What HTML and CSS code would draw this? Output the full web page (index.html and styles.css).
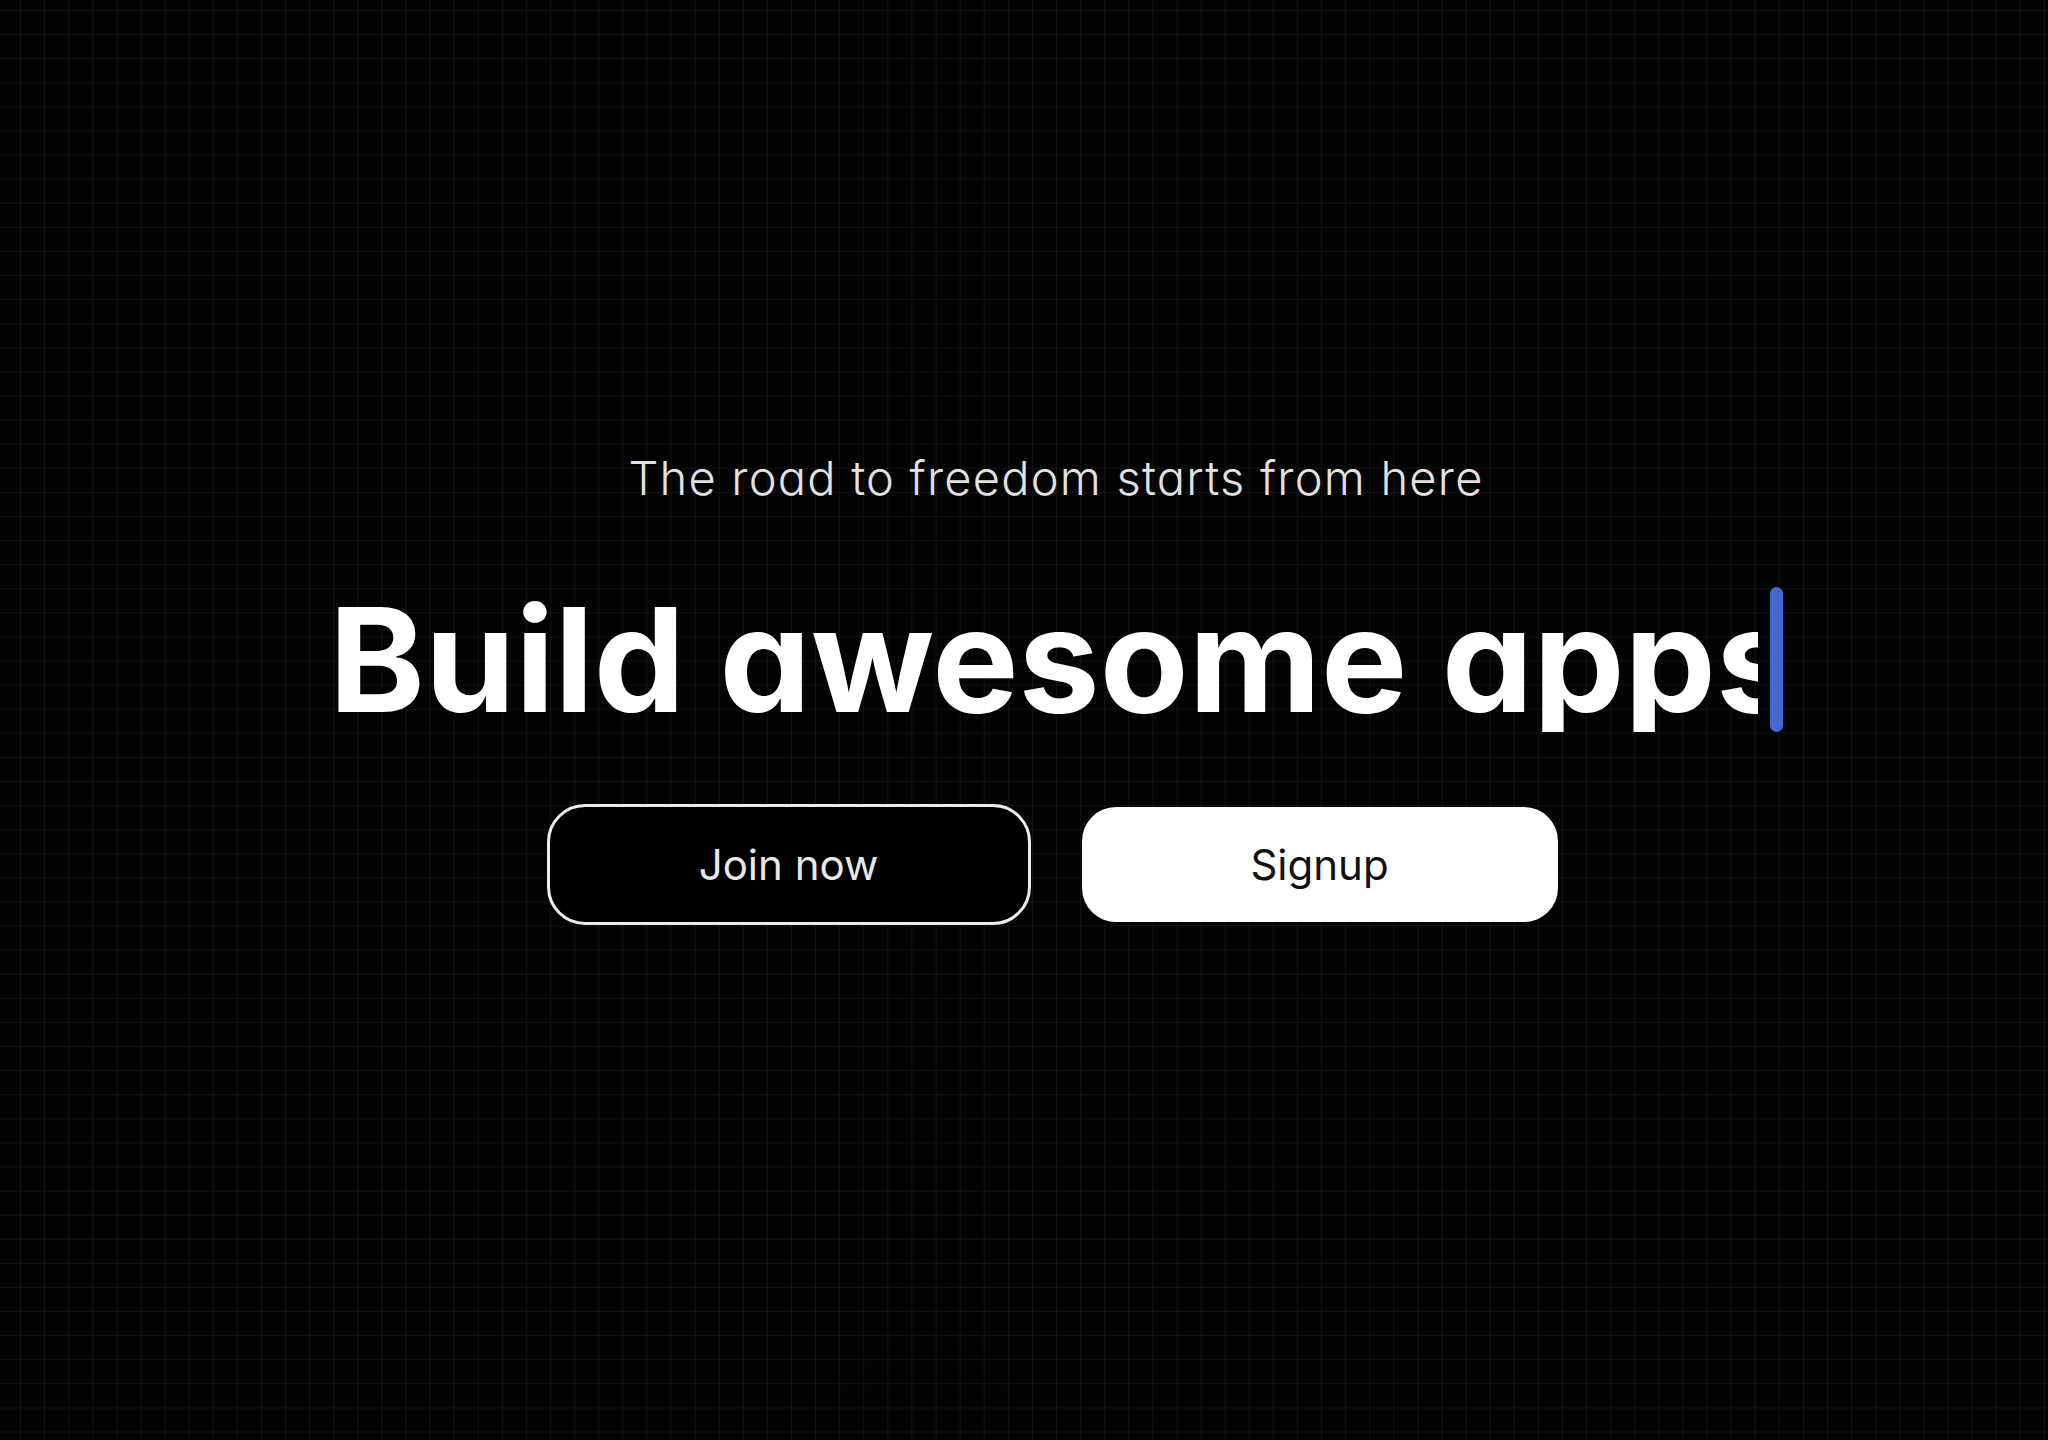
FILE: index.html
```html
<!DOCTYPE html>
<html lang="en">
<head>
<meta charset="utf-8">
<title>Build awesome apps</title>
<link rel="stylesheet" href="styles.css">
</head>
<body>
<main class="hero">
  <p class="tagline">The road to freedom starts from here</p>
  <h1 class="headline"><span class="typed">Build awesome apps</span><span class="caret"></span></h1>
  <div class="actions">
    <button class="btn btn-outline" type="button">Join now</button>
    <button class="btn btn-solid" type="button">Signup</button>
  </div>
</main>
</body>
</html>
```

FILE: styles.css
```css
html, body {
  margin: 0;
  padding: 0;
}

body {
  min-height: 100vh;
  background-color: #030303;
  background-image:
    linear-gradient(to right, rgba(255,255,255,0.06) 1px, transparent 1px),
    linear-gradient(to bottom, rgba(255,255,255,0.06) 1px, transparent 1px);
  background-size: 24.1px 24.1px;
  background-position: 20px 10px;
  font-family: Inter, "Noto Sans", sans-serif;
  font-feature-settings: "cv11" 1;
  color: #fff;
}

.hero {
  box-sizing: border-box;
  min-height: 100vh;
  padding: 450px 0 0 64px;
  display: flex;
  flex-direction: column;
  align-items: center;
}

.tagline {
  margin: 0;
  font-size: 47px;
  line-height: 1.2;
  font-weight: 300;
  color: #e2e2e2;
  letter-spacing: 0.026em;
}

.headline {
  margin: 81px 0 0 0;
  display: flex;
  font-size: 145px;
  line-height: 1;
  font-weight: 700;
  letter-spacing: 0;
  color: #fff;
}

.typed {
  display: block;
  width: 1429px;
  overflow: hidden;
  white-space: nowrap;
}

.caret {
  display: block;
  width: 13px;
  margin-left: 12px;
  border-radius: 7px;
  background: #4169cf;
}

.actions {
  margin: 72px 0 0 -8px;
  display: flex;
  align-items: center;
  gap: 51px;
}

.btn {
  box-sizing: border-box;
  font-family: Inter, "Noto Sans", sans-serif;
  font-feature-settings: "cv11" 1;
  font-size: 42px;
  font-weight: 400;
  cursor: pointer;
  padding: 0;
}

.btn-outline {
  width: 484px;
  height: 121px;
  border: 3px solid #ececec;
  border-radius: 38px;
  background: #000;
  color: #e8e8e8;
}

.btn-solid {
  width: 476px;
  height: 115px;
  border: 0;
  border-radius: 34px;
  background: #fff;
  color: #111;
}
```
